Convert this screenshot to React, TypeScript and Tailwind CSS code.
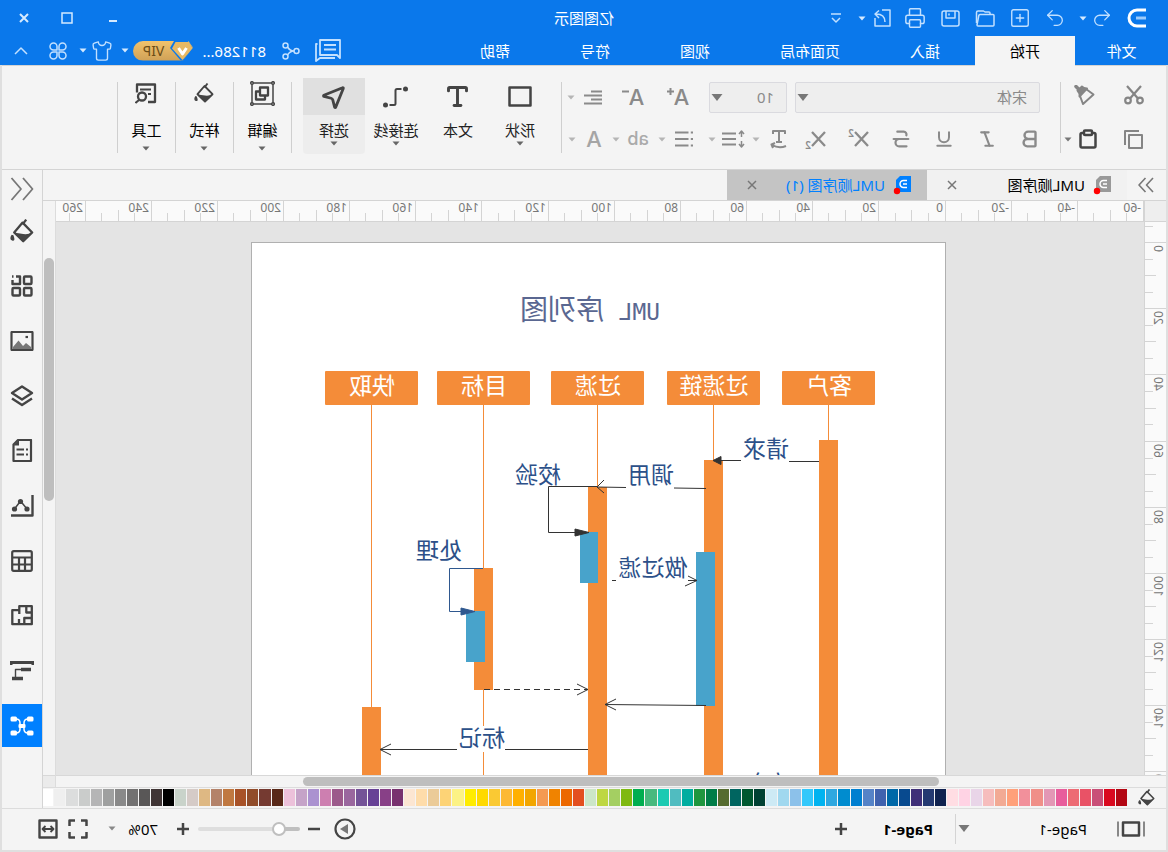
import type { ReactNode } from 'react';
import { Bold, Italic, MousePointer2, Printer, Redo2, Shirt, SquarePlus, Strikethrough, Type, Underline, Undo2 } from 'lucide-react';

const MENU = ['插入', '页面布局', '视图', '符号', '帮助'];

const PALETTE = (
  'b30713 d9091f c94f78 e95266 ed6b74 e85d9c e397b5 f08f88 f2909b ffa07a f2aa94 f6bdbd e9d5e8 ffd3e4 ffdde3 ' +
  '10224f 243971 3f2f78 084a8f 0068a8 4062ae 5583c7 007fd0 008ccf 2fa8e0 00b3f0 33c8fb 8cc1ea a0d8ef cdeaf5 ' +
  '004133 005830 006560 556b2f 007d48 1f963f 00ada0 50bcc0 1bcab2 48b97e 00ae50 7fb911 a4cf62 bed742 cce6c8 ' +
  'e34f20 ec6800 f08300 f49a52 f2a600 ffb000 fdb934 fac933 ffd900 ffec00 fcf285 fdd376 ebcb98 fedcaa fce6d2 ' +
  '78326f 884087 674196 745397 9a679e 9c5a8b cd7fb0 ab92d0 c5a3c8 ecc1da 582818 753a31 914c2a a85228 c07840 ' +
  'b4836a deb883 d5cbc7 c9d3ca 000000 403535 595757 727171 898989 9fa0a0 b5b5b6 cacccb dcdddd efefef ffffff'
).split(' ');

// pixels per 20mm at 70% zoom
const STEP = 66.15;

function cells(from: number, count: number) {
  return Array.from({ length: count }, (_, i) => ({
    label: from + i * 20,
    size: Math.round((i + 1) * STEP) - Math.round(i * STEP),
  }));
}

function Svg({ w, h, sw = 2, className, children }: { w: number; h: number; sw?: number; className?: string; children: ReactNode }) {
  return (
    <svg
      width={w}
      height={h}
      viewBox={`0 0 ${w} ${h}`}
      fill="none"
      stroke="currentColor"
      strokeWidth={sw}
      strokeLinejoin="round"
      className={`shrink-0 ${className ?? ''}`}
      aria-hidden="true"
    >
      {children}
    </svg>
  );
}

function Caret({ className = '' }: { className?: string }) {
  return (
    <Svg w={8} h={5} className={className}>
      <path d="M0.5 0.5h7L4 4.5z" fill="currentColor" stroke="none" />
    </Svg>
  );
}

function Bucket({ size = 20, className }: { size?: number; className?: string }) {
  return (
    <svg width={size} height={size} viewBox="0 0 20 20" fill="none" stroke="currentColor" strokeWidth="1.9" className={`shrink-0 ${className ?? ''}`} aria-hidden="true">
      <path d="M9.5 3 1.5 11.2l7.5 7.3 7.5-7.3z" strokeLinejoin="round" />
      <path d="M6.5 0.5 9.500 4.500" />
      <path d="M1.500 11.500q3.500 1.500 7.500 1t7.500-1L9 19z" fill="currentColor" stroke="none" />
      <path d="M18 13.500q2 3 0 3.800t0-3.800" fill="currentColor" stroke="currentColor" strokeWidth="1.400" />
    </svg>
  );
}

function IconButton({ label, className = 'w-9', children }: { label: string; className?: string; children: ReactNode }) {
  return (
    <button type="button" aria-label={label} className={`flex h-[30px] shrink-0 items-center justify-center ${className}`}>
      {children}
    </button>
  );
}

function CaretButton({ label, className = 'text-[#b5b5b5]' }: { label: string; className?: string }) {
  return (
    <button type="button" aria-label={label} className={`flex h-[30px] w-2 shrink-0 items-center justify-center ${className}`}>
      <Caret />
    </button>
  );
}

function TitleBar() {
  return (
    <div className="flex h-9 items-center">
      <div className="flex flex-1 items-center px-[3px] text-[#c2e0ff]">
        <Svg w={19} h={20} sw={3} className="ml-[19px] text-white">
          <path d="M0 2h9a8 8 0 0 1 0 16H0" />
          <path d="M0 10h10" stroke="#9ccbfb" />
        </Svg>
        <IconButton label="撤销" className="ml-[13px] w-6"><Undo2 size={22} strokeWidth={1.4} /></IconButton>
        <CaretButton label="撤销列表" className="ml-[3px] text-[#d5eaff]" />
        <IconButton label="恢复" className="ml-1.5 w-[35px]"><Redo2 size={22} strokeWidth={1.4} /></IconButton>
        <IconButton label="新建" className="w-[35px]"><SquarePlus size={22} strokeWidth={1.500} /></IconButton>
        <IconButton label="打开" className="w-[35px]">
          <Svg w={20} h={17} sw={1.500}>
            <path d="M1 15V5.500q0-1 1-1h13q1 0 1.200 1l1.800 9.500q0 1-1 1H2q-1 0-1-1z" />
            <path d="M5 4.500V3q0-1 1-1h4l1.500-1H17q1.500 0 1.500 1.500V13" />
          </Svg>
        </IconButton>
        <IconButton label="保存" className="w-[35px]">
          <Svg w={19} h={17} sw={1.500}>
            <rect x="1" y="1" width="17" height="15" rx="2" />
            <path d="M5 1v7h9V1M11 3.500v2" />
          </Svg>
        </IconButton>
        <IconButton label="打印" className="w-[35px]"><Printer size={22} strokeWidth={1.600} /></IconButton>
        <IconButton label="导出" className="ml-1 w-6">
          <Svg w={18} h={18} sw={1.500}>
            <path d="M9 1H1v16h15v-8" />
            <path d="M6 13q0-8 9-8M12 1.500 16 5l-4 4" />
          </Svg>
        </IconButton>
        <CaretButton label="导出列表" className="ml-1 text-[#d5eaff]" />
        <IconButton label="更多" className="ml-3.5 w-4">
          <Svg w={10} h={10} sw={1.500}><path d="M0 1h10M1 5l4 4 4-4" /></Svg>
        </IconButton>
      </div>
      <h1 className="text-[15px] leading-5 text-white">亿图图示</h1>
      <div className="flex flex-1 justify-end px-[3px] text-[#d5eaff]">
        <IconButton label="最小化" className="w-10"><Svg w={8} h={10}><path d="M0 8h8" /></Svg></IconButton>
        <IconButton label="最大化" className="ml-1 w-11"><Svg w={12} h={12} sw={1.500}><rect x="1" y="1" width="10" height="10" strokeLinejoin="miter" /></Svg></IconButton>
        <IconButton label="关闭" className="w-[42px]"><Svg w={10} h={10}><path d="M1 1l8 8M9 1 1 9" /></Svg></IconButton>
      </div>
    </div>
  );
}

function MenuBar() {
  return (
    <div className="flex h-[29px] items-stretch text-[15px] leading-5 text-white">
      <nav className="flex flex-1">
        <button type="button" className="w-[93px]">文件</button>
        <button type="button" className="relative -mb-px bg-[#f4f4f4] px-[35px] text-black">开始</button>
        {MENU.map((m) => (
          <button type="button" key={m} className="px-[35px]">{m}</button>
        ))}
      </nav>
      <div className="flex items-center pr-[13px] text-[#c2e0ff]">
        <IconButton label="消息" className="w-[26px]">
          <Svg w={26} h={23} sw={1.800}>
            <path d="M1 1h20v15H4l-3 3zM5 6h12M5 10.500h12" />
            <path d="M23.500 5h1.500v17l-4-3H6" />
          </Svg>
        </IconButton>
        <IconButton label="分享" className="ml-[15px] w-[18px]">
          <Svg w={18} h={18} sw={1.500}>
            <circle cx="3.500" cy="9" r="2.500" /><circle cx="14.500" cy="3.500" r="2.500" /><circle cx="14.500" cy="14.500" r="2.500" />
            <path d="M6 9q4 0 6.500-4M6 9q4 0 6.500 4" />
          </Svg>
        </IconButton>
        <span className="ml-4 w-[73px] text-white">811286...</span>
        <button type="button" className="relative h-5 w-[60px] rounded-r-full bg-linear-to-b from-[#f1c26c] to-[#cfa157] pl-[19px] text-sm leading-5 text-[#6b4c17] [clip-path:polygon(5px_0,100%_0,100%_100%,10px_100%,0_7px)]">
          VIP
          <Svg w={24} h={20} className="absolute left-0 top-0">
            <path d="M0 7 5 0h14l4 7-12 14H0z" fill="#0a78eb" stroke="none" />
            <path d="M0 7.500 4 1h13.500L21 7.500 10.500 19z" fill="#e8b964" stroke="none" />
            <path d="M6.500 7l4 6 4-6" stroke="#fff" strokeWidth="3" />
          </Svg>
        </button>
        <CaretButton label="账户" className="ml-1 text-[#d5eaff]" />
        <IconButton label="主题" className="ml-2 w-[22px]"><Shirt size={22} strokeWidth={1.500} /></IconButton>
        <CaretButton label="主题列表" className="ml-1 text-[#d5eaff]" />
        <IconButton label="应用" className="ml-3 w-[18px]">
          <Svg w={18} h={18} sw={1.500}>
            <path d="M8 8H4.500A3.500 3.500 0 1 1 8 4.500zM10 8V4.500A3.500 3.500 0 1 1 13.500 8zM8 10v3.500A3.500 3.500 0 1 1 4.500 10zM10 10h3.500A3.500 3.500 0 1 1 10 13.500z" />
          </Svg>
        </IconButton>
        <IconButton label="收起" className="ml-5 w-4"><Svg w={14} h={8} sw={1.500}><path d="M1 7l6-6 6 6" /></Svg></IconButton>
      </div>
    </div>
  );
}

function Divider() {
  return <div className="h-[71px] w-px shrink-0 bg-[#cfcfcf]" />;
}

function BigButton({ label, active, caret = true, children }: { label: string; active?: boolean; caret?: boolean; children: ReactNode }) {
  return (
    <button
      type="button"
      className={`-mt-1 flex h-[76px] w-[62px] flex-col items-center rounded-sm text-[15px] leading-5 text-[#222] ${active ? 'bg-[#ededed]' : ''}`}
    >
      <span className={`flex h-[37px] w-full items-center justify-center text-[#444] ${active ? 'bg-[#e0e0e0]' : ''}`}>{children}</span>
      <span className="mt-[5px] whitespace-nowrap">{label}</span>
      {caret && <Caret className="mt-px text-[#666]" />}
    </button>
  );
}

function MenuGroup({ label, children }: { label: string; children: ReactNode }) {
  return (
    <button type="button" className="-mt-1 flex h-[76px] w-[57px] flex-col items-center text-[15px] leading-5 text-black">
      <span className="flex h-[30px] items-center text-[#444]">{children}</span>
      <span className="mt-3">{label}</span>
      <Caret className="mt-1.5 text-[#666]" />
    </button>
  );
}

function Letter({ children, className = 'text-[22px]' }: { children: ReactNode; className?: string }) {
  return <span className={`font-[Inter] font-medium leading-6 ${className}`}>{children}</span>;
}

function Ribbon() {
  return (
    <div className="flex h-[105px] items-start border-y border-[#d4d4d4] bg-[#f4f4f4] pl-2 pt-4">
      <div className="flex w-[97px] flex-col gap-3 text-[#858585]">
        <div className="flex h-[30px]">
          <IconButton label="剪切" className="-mt-0.5 w-12">
            <Svg w={20} h={20} sw={2.200}>
              <circle cx="4" cy="15.500" r="2.800" /><circle cx="16" cy="15.500" r="2.800" />
              <path d="M3 1l11 12.500M17 1 6 13.500" />
            </Svg>
          </IconButton>
          <IconButton label="格式刷" className="-mt-0.5 w-[50px]">
            <Svg w={21} h={21}>
              <path d="M9 4 1.500 9.500 12 19l3-8" />
              <path d="M8 3.500q4 0 5-2l4.500 4q-2.500 2.500-2 6z" fill="currentColor" />
              <path d="M19 1.500 15.500 5" strokeWidth="3.500" strokeLinecap="round" />
            </Svg>
          </IconButton>
        </div>
        <div className="flex">
          <IconButton label="复制" className="w-12">
            <Svg w={19} h={19}><rect x="1" y="5" width="13" height="13" /><path d="M4 1h14v14" /></Svg>
          </IconButton>
          <IconButton label="粘贴" className="ml-1 w-9 text-[#444]">
            <Svg w={18} h={20} sw={2.500}>
              <rect x="1.500" y="4" width="15" height="14.500" rx="1.500" />
              <rect x="5" y="1.500" width="8" height="4.500" rx="1" fill="#f4f4f4" />
            </Svg>
          </IconButton>
          <CaretButton label="粘贴选项" className="-ml-0.5 text-[#777]" />
        </div>
      </div>
      <Divider />
      <div className="flex w-[498px] flex-col gap-3 pl-5 text-[#8a8a8a]">
        <div className="flex h-[30px] items-center">
          <div className="relative">
            <select aria-label="字体" className="h-[31px] w-[245px] appearance-none rounded-xs border border-[#dadadf] bg-[#eee] pl-3 text-[15px] leading-5 text-[#8a8a8a]">
              <option>宋体</option>
            </select>
            <Svg w={12} h={8} className="pointer-events-none absolute right-0.5 top-3 text-[#777]"><path d="M0.500 0h11L6 7z" fill="currentColor" stroke="none" /></Svg>
          </div>
          <div className="relative ml-2">
            <select aria-label="字号" className="h-[31px] w-[78px] appearance-none rounded-xs border border-[#dadadf] bg-[#eee] pl-3 text-[15px] leading-5 text-[#8a8a8a]">
              <option>10</option>
            </select>
            <Svg w={12} h={8} className="pointer-events-none absolute right-0.5 top-3 text-[#777]"><path d="M0.500 0h11L6 7z" fill="currentColor" stroke="none" /></Svg>
          </div>
          <IconButton label="增大字号" className="ml-2 w-[46px]">
            <Letter>A</Letter><Svg w={7} h={7} className="mb-3"><path d="M0 3.500h7M3.500 0v7" /></Svg>
          </IconButton>
          <IconButton label="减小字号" className="w-11">
            <Letter>A</Letter><Svg w={7} h={7} className="mb-3"><path d="M0 3.500h7" /></Svg>
          </IconButton>
          <IconButton label="对齐">
            <Svg w={18} h={15}><path d="M0 1.500h11M0 5.500h18M0 9.500h11M0 13.500h18" /></Svg>
          </IconButton>
          <CaretButton label="对齐选项" />
        </div>
        <div className="-ml-3 flex">
          <IconButton label="粗体" className="w-[43px]"><Bold size={22} strokeWidth={2.600} /></IconButton>
          <IconButton label="斜体" className="w-[43px]"><Italic size={20} strokeWidth={2.500} /></IconButton>
          <IconButton label="下划线" className="w-[43px]"><Underline size={20} strokeWidth={2.400} /></IconButton>
          <IconButton label="删除线" className="w-[43px]"><Strikethrough size={22} strokeWidth={2.400} /></IconButton>
          <IconButton label="上标" className="w-[43px]">
            <Svg w={15} h={16} sw={2.300}><path d="M1 1l13 14M14 1 1 15" /></Svg>
            <span className="mb-3 text-[10px] font-semibold leading-3">2</span>
          </IconButton>
          <IconButton label="下标" className="w-[43px]">
            <Svg w={15} h={16} sw={2.300}><path d="M1 1l13 14M14 1 1 15" /></Svg>
            <span className="mt-3 text-[10px] font-semibold leading-3">2</span>
          </IconButton>
          <IconButton label="文字方向" className="w-8">
            <Svg w={18} h={20}><path d="M2 5V2h12v3M8 2v11M5 13h6M1 17q7 3 14-1M12 14l3.500 1.500L14 19" /></Svg>
          </IconButton>
          <CaretButton label="文字方向选项" className="ml-0.5 text-[#b5b5b5]" />
          <IconButton label="行距">
            <Svg w={23} h={18}>
              <path d="M9 3.500h14M9 9h14M9 14.500h14" />
              <path d="M3.500 1v6M1 4l2.500-3L6 4M3.500 11v6M1 14l2.500 3L6 14" strokeWidth="1.500" />
            </Svg>
          </IconButton>
          <CaretButton label="行距选项" />
          <IconButton label="项目符号" className="ml-1.5 w-9">
            <Svg w={18} h={16}><path d="M4.500 1.500H18M4.500 8H18M4.500 14.500H18M0 1.500h2.200M0 8h2.200M0 14.500h2.200" /></Svg>
          </IconButton>
          <CaretButton label="项目符号选项" />
          <IconButton label="字符样式" className="ml-0.5 w-9 text-[#aaa]"><Letter className="text-lg">ab</Letter></IconButton>
          <CaretButton label="字符样式选项" />
          <IconButton label="字体颜色"><Letter className="text-[22px] text-[#a5a5a5]">A</Letter></IconButton>
          <CaretButton label="字体颜色选项" />
        </div>
      </div>
      <Divider />
      <div className="flex pl-2.5 pr-[11px]">
        <BigButton label="形状"><Svg w={24} h={22} sw={2.500}><rect x="1.500" y="1.500" width="21" height="18" /></Svg></BigButton>
        <BigButton label="文本" caret={false}><Type size={27} strokeWidth={2.600} /></BigButton>
        <BigButton label="连接线">
          <Svg w={25} h={22}>
            <circle cx="2.500" cy="3" r="2.500" fill="currentColor" stroke="none" />
            <circle cx="22.500" cy="19" r="2.500" fill="currentColor" stroke="none" />
            <path d="M6.500 3H11q1.500 0 1.500 1.500v13q0 1.500 1.500 1.500h4.500" />
          </Svg>
        </BigButton>
        <BigButton label="选择" active><MousePointer2 size={28} strokeWidth={2.400} /></BigButton>
      </div>
      <Divider />
      <MenuGroup label="编辑">
        <Svg w={25} h={25} sw={1.500}>
          <path d="M2 2h21v21H2z" />
          <g fill="#f4f4f4"><circle cx="2" cy="2" r="1.300" /><circle cx="23" cy="2" r="1.300" /><circle cx="2" cy="23" r="1.300" /><circle cx="23" cy="23" r="1.300" /></g>
          <path d="M7 6.500h8v8H7zM10 14.500v4h9v-8h-4" strokeWidth="2.300" />
        </Svg>
      </MenuGroup>
      <Divider />
      <MenuGroup label="样式"><Bucket size={20} /></MenuGroup>
      <Divider />
      <MenuGroup label="工具">
        <Svg w={22} h={21}>
          <path d="M9 19H2V1.500h18v8" strokeWidth="2.300" /><path d="M6 6.500h11M6 11h3" />
          <circle cx="15" cy="13.500" r="4" strokeWidth="2.300" /><path d="M18 17 21.500 20" />
        </Svg>
      </MenuGroup>
      <Divider />
    </div>
  );
}

function DocTab({ name, active }: { name: string; active?: boolean }) {
  return (
    <div className={`flex w-[200px] items-center pl-4 pr-5 text-[15px] leading-5 ${active ? 'bg-[#c4c4c4] text-[#0080ff]' : 'bg-[#f1f1f1] text-black'}`}>
      <Svg w={18} h={20} className={active ? '' : 'text-[#999]'}>
        <path d="M0 1h11l4 4v12H0z" fill="currentColor" stroke="none" />
        <path d="M4 5.500h3.500a3.500 3.500 0 0 1 0 7H4M4 9h4" stroke="#fff" strokeWidth="1.500" />
        <circle cx="14" cy="16" r="3.200" fill="#f00" stroke="none" />
      </Svg>
      <button type="button" className="ml-2 flex-1 whitespace-nowrap text-left">{name}</button>
      <button type="button" aria-label={`关闭 ${name}`} className="text-[#777]"><Svg w={10} h={10} sw={1.500}><path d="M1 1l8 8M9 1 1 9" /></Svg></button>
    </div>
  );
}

function HorizontalRuler() {
  return (
    <div className="flex h-5 min-w-0 flex-1 bg-[#fafafa]">
      {cells(-60, 16).map(({ label, size }) => (
        <div key={label} className="relative flex shrink-0 items-end" style={{ width: size }}>
          <div className="h-5 flex-1 border-l border-[#d4d4d4]" />
          <div className="h-2 flex-1 border-l border-[#d4d4d4]" />
          <div className="h-[11px] flex-1 border-l border-[#d4d4d4]" />
          <div className="h-2 flex-1 border-l border-[#d4d4d4]" />
          <span className="absolute left-[3px] top-0 text-xs leading-[14px] text-[#777]">{label}</span>
        </div>
      ))}
      <div className="relative flex flex-1 items-end">
        <div className="h-5 w-4 border-l border-[#d4d4d4]" />
        <div className="h-2 flex-1 border-l border-[#d4d4d4]" />
        <span className="absolute left-[3px] top-0 text-xs leading-[14px] text-[#777]">260</span>
      </div>
    </div>
  );
}

function VerticalRuler() {
  return (
    <div className="w-[22px] shrink-0 overflow-y-clip border-r border-[#d4d4d4] bg-[#fafafa]">
      <div className="-mt-[46px]">
        {cells(-20, 10).map(({ label, size }) => (
          <div key={label} className="relative flex flex-col items-end" style={{ height: size }}>
            <div className="w-full flex-1 border-t border-[#d4d4d4]" />
            <div className="w-2 flex-1 border-t border-[#d4d4d4]" />
            <div className="w-[11px] flex-1 border-t border-[#d4d4d4]" />
            <div className="w-2 flex-1 border-t border-[#d4d4d4]" />
            {label >= 0 && (
              <span className="absolute left-px top-[3px] rotate-180 text-xs leading-[14px] text-[#777] [writing-mode:vertical-rl]">{label}</span>
            )}
          </div>
        ))}
      </div>
    </div>
  );
}

const LIFELINES = [
  { name: '客户', x: 71, bar: 198, end: 600 },
  { name: '过滤链', x: 186, bar: 218, end: 600 },
  { name: '过滤', x: 302, bar: 245, end: 600 },
  { name: '目标', x: 416, bar: 326, end: 448 },
  { name: '快取', x: 528, bar: 465, end: 600 },
];

const MESSAGES = [
  { text: '请求', x: 180, y: 215 },
  { text: '调用', x: 295, y: 241 },
  { text: '校验', x: 408, y: 241 },
  { text: '做过滤', x: 293, y: 334 },
  { text: '处理', x: 507, y: 317 },
  { text: '标记', x: 464, y: 504 },
  { text: '响应', x: 176, y: 550 },
];

function Diagram() {
  return (
    <svg width="693" height="998" viewBox="1 1 693 998" fill="none" role="img" aria-label="UML 序列图">
      <text y="78" fill="#5a6791">
        <tspan x="286" className="font-[DejaVu_Sans_Mono] text-[23px]">UML</tspan>
        <tspan x="342" className="text-[28px]">序列图</tspan>
      </text>
      {LIFELINES.map(({ name, x, bar, end }) => (
        <g key={name}>
          <path d={`M${x + 46.5} 163V600`} stroke="#f48c39" />
          <rect x={x} y="129" width="93" height="34" rx="1" fill="#f48c39" />
          <text x={x + 46} y="152" textAnchor="middle" fill="#fff" className="text-[23px]">{name}</text>
          <rect x={x + 37} y={bar} width="19" height={end - bar} fill="#f48c39" />
        </g>
      ))}
      <rect x="231" y="310" width="19" height="154" fill="#48a3cb" />
      <rect x="348" y="290" width="18" height="51" fill="#48a3cb" />
      <rect x="461" y="369" width="19" height="51" fill="#48a3cb" />

      <g stroke="#333">
        <path d="M127 219.500H157M205 218.500H226" />
        <path d="M233 218.500 225 214.500v8z" fill="#333" />
        <path d="M240 246.500 272 246M320 245.500 349 245M342 238l7 7-7 6" />
        <path d="M348 244.500H397.500V290.500H370" />
        <path d="M357 290.500 371 287v7z" fill="#333" />
        <path d="M330 338.500h4M258 334l-9 4.500 12 5.500M249 338.500h9" />
        <path d="M462 447.500H358" strokeDasharray="6 4" />
        <path d="M369 442l-11 5.500 11 5.500" />
        <path d="M240 463.500 341 462.500M330 457l11 5.500-11 5.500" />
        <path d="M358 507.500H441M489 507.500H566M555 502l11 5.500-11 5.500" />
      </g>
      <g stroke="#2f588f">
        <path d="M463 326.500H496.500V369.500H484" />
        <path d="M471 369.500 485 366v7z" fill="#2f588f" />
      </g>
      <rect x="441" y="484" width="48" height="26" fill="#fff" />
      {MESSAGES.map(({ text, x, y }) => (
        <text key={text} x={x} y={y} textAnchor="middle" fill="#2c5089" className="text-[23px]">{text}</text>
      ))}
    </svg>
  );
}

function ColorBar() {
  return (
    <div className="flex h-[21px] items-start border-t border-[#dcdcdc] pl-[11px] pt-px">
      <Bucket size={17} className="text-[#444]" />
      <div className="ml-[11px] flex flex-1 gap-px">
        {PALETTE.map((c) => (
          <button type="button" key={c} aria-label={`#${c}`} className="h-[17px] flex-1" style={{ backgroundColor: `#${c}` }} />
        ))}
      </div>
    </div>
  );
}

function StatusBar() {
  return (
    <div className="flex h-[42px] items-center border-t border-[#dcdcdc] bg-[#f4f4f4] pb-0.5 pl-[21px] pr-9 text-[15px] leading-5 text-black">
      <button type="button" aria-label="页面视图" className="text-[#444]">
        <Svg w={28} h={16}>
          <rect x="6" y="1.500" width="16" height="13" strokeWidth="2.500" />
          <path d="M1 0.500v15M27 0.500v15" stroke="#888" />
        </Svg>
      </button>
      <button type="button" className="ml-[30px] w-[117px] text-left">Page-1</button>
      <button type="button" aria-label="页面列表" className="text-[#777]"><Svg w={12} h={8}><path d="M0.500 0h11L6 7z" fill="currentColor" stroke="none" /></Svg></button>
      <div className="ml-0.5 h-[30px] w-px bg-[#d4d4d4]" />
      <button type="button" className="ml-[22px] font-bold">Page-1</button>
      <button type="button" aria-label="添加页面" className="ml-9 text-[#444]"><Svg w={12} h={12} sw={2.500}><path d="M0 6h12M6 0v12" /></Svg></button>
      <div className="flex-1" />
      <button type="button" aria-label="播放" className="text-[#444]">
        <Svg w={22} h={22} sw={2.200}><circle cx="11" cy="11" r="9.500" /><path d="M8 6v10l8-5z" fill="#777" stroke="none" /></Svg>
      </button>
      <button type="button" aria-label="缩小" className="ml-3.5 text-[#444]"><Svg w={12} h={12} sw={2.500}><path d="M0 6h12" /></Svg></button>
      <input
        type="range"
        aria-label="缩放"
        defaultValue={16}
        className="ml-2 h-1 w-[102px] appearance-none rounded-full bg-[linear-gradient(to_right,#bfbfbf_20%,#dedede_20%)] [&::-webkit-slider-thumb]:size-3.5 [&::-webkit-slider-thumb]:appearance-none [&::-webkit-slider-thumb]:rounded-full [&::-webkit-slider-thumb]:border-2 [&::-webkit-slider-thumb]:border-[#bfbfbf] [&::-webkit-slider-thumb]:bg-white"
      />
      <button type="button" aria-label="放大" className="ml-[9px] text-[#444]"><Svg w={12} h={12} sw={2.500}><path d="M0 6h12M6 0v12" /></Svg></button>
      <span className="ml-[19px] w-[42px]">70%</span>
      <Caret className="text-[#888]" />
      <button type="button" aria-label="全屏" className="ml-5 text-[#444]">
        <Svg w={20} h={20} sw={2.500}><path d="M1.500 7V1.500H7M13 1.500h5.500V7M18.500 13v5.500H13M7 18.500H1.500V13" /></Svg>
      </button>
      <button type="button" aria-label="适应宽度" className="ml-2.5 text-[#444]">
        <Svg w={20} h={20} sw={2.400}>
          <rect x="1.500" y="1.500" width="17" height="17" />
          <path d="M5 10h10M7.500 7 4.500 10l3 3M12.500 7l3 3-3 3" strokeWidth="1.800" />
        </Svg>
      </button>
    </div>
  );
}

const TOOLS: { label: string; icon: ReactNode }[] = [
  { label: '填充', icon: <Bucket size={24} /> },
  {
    label: '符号库',
    icon: (
      <Svg w={22} h={22} sw={2.400}>
        <rect x="1.500" y="1.500" width="7.500" height="7.500" rx="1" /><rect x="1.500" y="13" width="7.500" height="7.500" rx="1" /><rect x="13" y="13" width="7.500" height="7.500" rx="1" />
        <path d="M17 1.500h-4v7.500h7.500V5M19.500 1.500h1.500" />
      </Svg>
    ),
  },
  {
    label: '图片',
    icon: (
      <Svg w={24} h={20} sw={2.200}>
        <rect x="1.500" y="1" width="21" height="18" rx="0.500" />
        <path d="M3 16l5-4 3 3 4.500-5.500L21 16v2H3z" fill="#777" stroke="none" /><path d="M6 6h2.500" />
      </Svg>
    ),
  },
  { label: '图层', icon: <Svg w={24} h={22} sw={2.400}><path d="M12 1.500 22 8l-10 6.500L2 8zM2 13.500 12 20l10-6.500" /></Svg> },
  {
    label: '文档',
    icon: <Svg w={22} h={24} sw={2.200}><path d="M2 1h13l4.500 4.500V22H2zM5 10.500h2M9 10.500h7.500M5 15.500h2M9 15.500h7.500" /><path d="M14 1v5.500h5.500z" fill="currentColor" stroke="none" /></Svg>,
  },
  {
    label: '图表',
    icon: (
      <Svg w={24} h={22}>
        <path d="M1.500 0v20.500H23" strokeWidth="2.400" /><path d="m7 14 6.500-8 6 8" strokeWidth="1.500" />
        <g fill="currentColor" stroke="none"><circle cx="7" cy="14" r="2.600" /><circle cx="13.500" cy="6.500" r="2.600" /><circle cx="19.500" cy="14" r="2.600" /></g>
      </Svg>
    ),
  },
  { label: '表格', icon: <Svg w={22} h={22} sw={2.200}><rect x="1.200" y="1.200" width="19.600" height="19.600" rx="1.500" /><path d="M1 7.500h20M1 14.500h20M8 7.500V21M14 7.500V21" /></Svg> },
  { label: '平面图', icon: <Svg w={22} h={21} sw={2.300}><path d="M1.200 1.200h12.500v4h7v14H1.200zM1.200 7.500h5.500V1.200M13.700 5v4M1.200 13h7.500v6M14 19.200V14" /></Svg> },
  {
    label: '甘特图',
    icon: <Svg w={24} h={22}><path d="M1 5V2.500h22V5" strokeWidth="3" strokeLinejoin="miter" /><path d="M3 9.500h10" strokeWidth="3.500" /><path d="M12 9.500h6.500V18" strokeWidth="1.400" /><path d="M11 18.500h11" strokeWidth="3.500" /></Svg>,
  },
  {
    label: '思维导图',
    icon: (
      <Svg w={24} h={22} sw={1.500}>
        <path d="M6 4q4 0 4 4v6q0 4-4 4M18 4q-4 0-4 4v6q0 4 4 4M9 11h6" />
        <g fill="currentColor" stroke="none">
          <rect x="0.500" y="1.500" width="6.500" height="5" rx="1.500" /><rect x="17" y="1.500" width="6.500" height="5" rx="1.500" />
          <rect x="0.500" y="15.500" width="6.500" height="5" rx="1.500" /><rect x="17" y="15.500" width="6.500" height="5" rx="1.500" />
          <rect x="8.500" y="9" width="7" height="4" rx="1" />
        </g>
      </Svg>
    ),
  },
];

function SidePanel() {
  return (
    <aside className="flex w-[41px] shrink-0 flex-col border-l border-[#d4d4d4] text-[#444]">
      <button type="button" aria-label="展开面板" className="flex h-[38px] items-center justify-center text-[#777]">
        <Svg w={24} h={24} sw={1.800}><path d="M11 1 1.500 12 11 23M22.500 1 13 12l9.500 11" /></Svg>
      </button>
      <div className="mt-px flex flex-col gap-3">
        {TOOLS.map(({ label, icon }, i) => (
          <button type="button" key={label} aria-label={label} className={`flex h-[43px] items-center justify-center ${i === TOOLS.length - 1 ? 'bg-[#0080ff] text-white' : ''}`}>
            {icon}
          </button>
        ))}
      </div>
    </aside>
  );
}

export default function App() {
  return (
    <div className="flex h-screen -scale-x-100 flex-col overflow-hidden bg-[#dfdfdf] font-['Noto_Sans','Noto_Sans_CJK_SC',sans-serif]">
      <header className="bg-[#0a78eb]">
        <TitleBar />
        <MenuBar />
      </header>
      <div className="mx-0.5 mb-0.5 flex min-h-0 flex-1 flex-col bg-[#f4f4f4]">
        <Ribbon />
        <div className="flex min-h-0 flex-1">
          <div className="flex min-w-0 flex-1 flex-col">
            <div className="flex h-[31px] shrink-0 border-b border-[#d4d4d4]">
              <button type="button" aria-label="展开" className="flex w-[39px] items-center justify-center text-[#777]">
                <Svg w={16} h={16} sw={1.600}><path d="m1 1 6.500 7L1 15M8.500 1 15 8l-6.500 7" /></Svg>
              </button>
              <DocTab name="UML顺序图" />
              <DocTab name="UML顺序图 (1)" active />
            </div>
            <div className="flex min-h-0 flex-1">
              <div className="flex min-w-0 flex-1 flex-col">
                <div className="flex shrink-0 border-b border-[#d4d4d4]">
                  <div className="w-[22px] border-r border-[#d4d4d4] bg-[#eee]" />
                  <HorizontalRuler />
                </div>
                <div className="flex min-h-0 flex-1">
                  <VerticalRuler />
                  <main className="relative min-w-0 flex-1 overflow-hidden bg-[#e4e4e4]">
                    <div className="absolute left-[198px] top-5 border border-[#b0b0b0] bg-white">
                      <Diagram />
                    </div>
                  </main>
                </div>
                <div className="h-3 shrink-0 border-t border-[#d8d8d8] pt-px">
                  <div className="ml-[227px] h-[9px] w-[636px] rounded-full bg-[#bebebe]" />
                </div>
              </div>
              <div className="flex w-[13px] shrink-0 flex-col border-l border-[#dcdcdc]">
                <div className="mx-auto mt-[57px] h-[243px] w-2.5 rounded-full bg-[#bebebe]" />
                <div className="mt-auto h-3 border-t border-[#d8d8d8] bg-[#ebebeb]" />
              </div>
            </div>
            <ColorBar />
          </div>
          <SidePanel />
        </div>
        <StatusBar />
      </div>
    </div>
  );
}
